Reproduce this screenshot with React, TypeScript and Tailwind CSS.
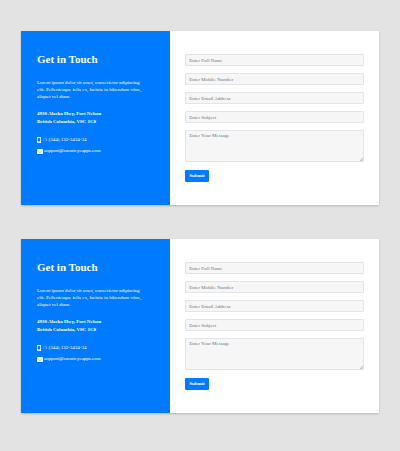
interface FieldProps {
  label: string;
  type?: string;
}

export default function App() {
  return (
    <main className="flex min-h-screen flex-col gap-[34px] bg-[#e3e3e3] px-[21px] pt-[31px] pb-[37px] font-['Liberation_Serif',serif]">
      <ContactCard />
      <ContactCard />
    </main>
  );
}

function ContactCard() {
  return (
    <section className="grid grid-cols-12 bg-white shadow-[0_1px_2px_rgba(0,0,0,0.2)]">
      {/* Contact details */}
      <div className="col-span-5 bg-[#007bff] px-4 pt-[22px] text-white">
        <h2 className="text-[11px] leading-3 font-bold">Get in Touch</h2>
        <p className="mt-[14px] text-[5px] leading-[7px]">
          Lorem ipsum dolor sit amet, consectetur adipiscing
          <br />
          elit. Pellentesque felis ex, lacinia in bibendum vitae,
          <br />
          aliquet vel diam.
        </p>
        <address className="mt-[10px] not-italic">
          <p className="text-[5px] leading-2 font-bold">
            4930 Alaska Hwy, Fort Nelson
            <br />
            British Columbia, V0C 1C0
          </p>
          <div className="mt-[10px] flex flex-col gap-[3px] text-[5px] leading-2">
            <a href="tel:+13441323434" className="flex items-center gap-px">
              <PhoneIcon />
              +1 (344) 132-3434-34
            </a>
            <a href="mailto:support@smarteyeapps.com" className="flex items-center gap-px">
              <MailIcon />
              support@smarteyeapps.com
            </a>
          </div>
        </address>
      </div>

      {/* Form */}
      <form className="col-span-7 flex flex-col items-start gap-2 px-[15px] py-[23px]">
        <div className="flex w-full flex-col gap-[7px]">
          <Field label="Enter Full Name" />
          <Field label="Enter Mobile Number" type="tel" />
          <Field label="Enter Email Address" type="email" />
          <Field label="Enter Subject" />
          <div className="relative">
            <textarea
              aria-label="Enter Your Message"
              placeholder="Enter Your Message"
              className="block h-8 w-full resize-none rounded-[1px] border border-[#e2e4e6] bg-[#f6f6f6] px-[3px] py-px text-[5px] leading-2 placeholder:text-[#6c757d]"
            />
            <svg viewBox="0 0 3 3" className="absolute right-px bottom-px size-[3px]" aria-hidden="true">
              <path d="M0 3L3 0M1.7 3L3 1.7" stroke="#777" strokeWidth="0.5" />
            </svg>
          </div>
        </div>
        <button type="button" className="h-3 rounded-[1px] bg-[#007bff] px-1 text-[5px] leading-3 font-bold text-white">
          Submit
        </button>
      </form>
    </section>
  );
}

function Field({ label, type = "text" }: FieldProps) {
  return (
    <input
      type={type}
      aria-label={label}
      placeholder={label}
      className="block h-3 w-full rounded-[1px] border border-[#e2e4e6] bg-[#f6f6f6] px-[3px] text-[5px] leading-2 placeholder:text-[#6c757d]"
    />
  );
}

function PhoneIcon() {
  return (
    <svg viewBox="0 0 4 6" className="h-[6px] w-1 shrink-0" aria-hidden="true">
      <rect width="4" height="6" rx="0.5" fill="#fff" />
      <rect x="0.8" y="0.9" width="2.4" height="3.6" fill="#007bff" />
      <circle cx="2" cy="5.2" r="0.3" fill="#007bff" />
    </svg>
  );
}

function MailIcon() {
  return (
    <svg viewBox="0 0 6 5" className="h-[5px] w-[6px] shrink-0" aria-hidden="true">
      <rect width="6" height="5" rx="0.5" fill="#fff" />
      <path d="M0 1.5L2.5 3.2Q3 3.5 3.5 3.2L6 1.5" fill="none" stroke="#007bff" strokeWidth="0.3" />
    </svg>
  );
}
